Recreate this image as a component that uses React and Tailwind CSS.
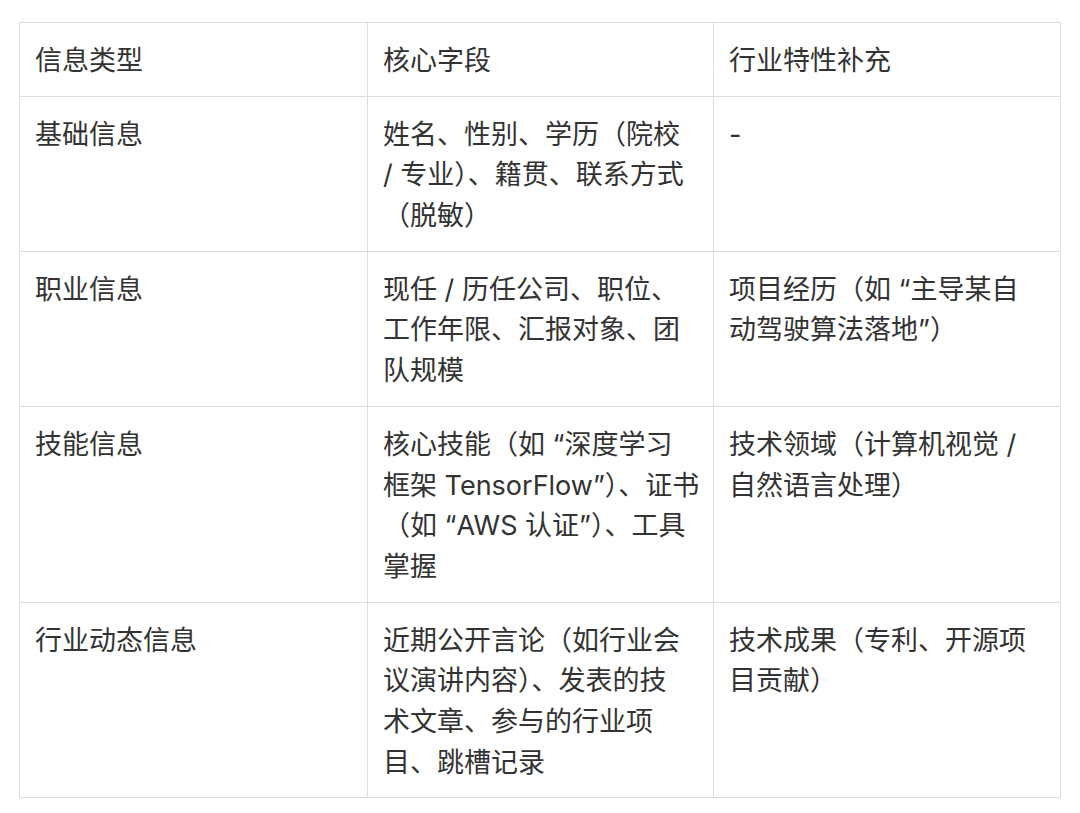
import React from "react";

const rows = [
  {
    a: ["信息类型"],
    b: ["核心字段"],
    c: ["行业特性补充"],
  },
  {
    a: ["基础信息"],
    b: ["姓名、性别、学历（院校", "/ 专业）、籍贯、联系方式", "（脱敏）"],
    c: ["-"],
  },
  {
    a: ["职业信息"],
    b: ["现任 / 历任公司、职位、", "工作年限、汇报对象、团", "队规模"],
    c: ["项目经历（如 “主导某自", "动驾驶算法落地”）"],
  },
  {
    a: ["技能信息"],
    b: ["核心技能（如 “深度学习", "框架 TensorFlow”）、证书", "（如 “AWS 认证”）、工具", "掌握"],
    c: ["技术领域（计算机视觉 /", "自然语言处理）"],
  },
  {
    a: ["行业动态信息"],
    b: ["近期公开言论（如行业会", "议演讲内容）、发表的技", "术文章、参与的行业项", "目、跳槽记录"],
    c: ["技术成果（专利、开源项", "目贡献）"],
  },
];

function Cell({ lines }) {
  return (
    <td className="border border-[#dddddd] pl-[15px] pr-4 pt-[18px] pb-[14px] align-top">
      {lines.map((l, i) => (
        <div key={i} className="whitespace-nowrap h-[40.7px]">
          {l}
        </div>
      ))}
    </td>
  );
}

export default function App() {
  return (
    <div
      className="min-h-[813px] bg-white pl-[19px] pt-[22px] text-[#333333] text-[27px] leading-[40.7px]"
      style={{ fontFamily: 'Inter, "Noto Sans CJK SC", sans-serif' }}
    >
      <table className="w-[1041px] table-fixed border-collapse">
        <colgroup>
          <col className="w-[348px]" />
          <col className="w-[346px]" />
          <col className="w-[347px]" />
        </colgroup>
        <tbody>
          {rows.map((r, i) => (
            <tr key={i}>
              <Cell lines={r.a} />
              <Cell lines={r.b} />
              <Cell lines={r.c} />
            </tr>
          ))}
        </tbody>
      </table>
    </div>
  );
}
